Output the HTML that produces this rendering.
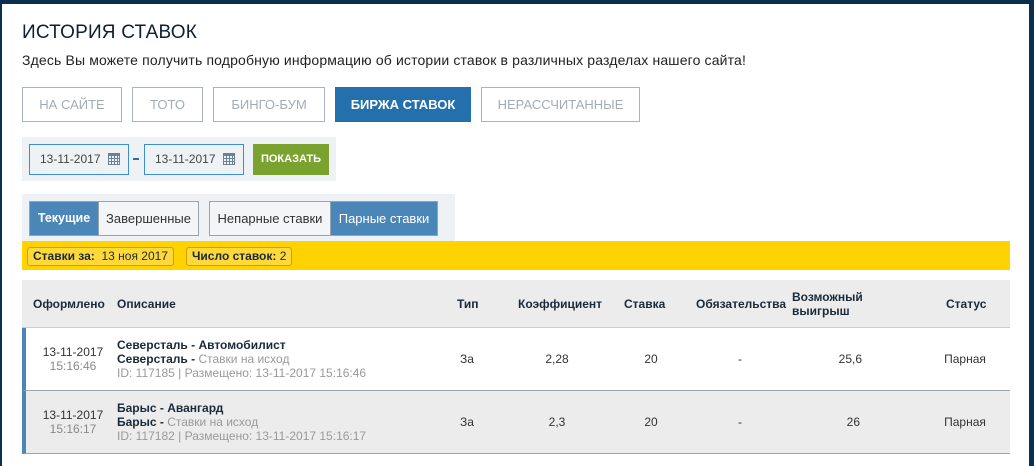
<!DOCTYPE html>
<html><head><meta charset="utf-8"><style>
*{margin:0;padding:0;box-sizing:border-box}
body{width:1034px;height:466px;overflow:hidden;background:#fff;font-family:"Liberation Sans",sans-serif;position:relative;color:#1a2a3a}
.a{position:absolute;white-space:nowrap}
.fr{position:absolute;background:#0d2f4f}
.tab{position:absolute;top:87px;height:35px;border:1px solid #a9b4bf;color:#a2acb6;font-size:13px;line-height:33px;text-align:center}
.btn{position:absolute;top:201px;height:35px;border:1px solid #97a3ae;font-size:13px;line-height:33px;text-align:center;color:#333;background:#eef2f5}
.on{background:#4a86b8;color:#fff;border-color:#97a3ae}
.inp{position:absolute;top:144px;height:31px;width:100px;border:1px solid #3d8ed0;background:#eef2f5;font-size:12px;line-height:29px;padding-left:10px;color:#444}
.cal{position:absolute;right:8px;top:8px;width:12px;height:12px;border:1px solid #6c7f93;border-top-width:3px;background:repeating-linear-gradient(90deg,transparent 0 2px,#6c7f93 2px 3px),repeating-linear-gradient(0deg,transparent 0 2px,#6c7f93 2px 3px)}
.badge{position:absolute;top:247px;height:19px;border:1px solid #c9a200;border-radius:3px;background:#ffd93a;font-size:12px;line-height:17px;padding:0 5px}
.h{position:absolute;font-size:12px;font-weight:bold;color:#1a2a3a}
.c{position:absolute;font-size:12px;color:#333;text-align:center}
</style></head><body>
<div class="fr" style="left:0;top:0;width:1034px;height:4px"></div>
<div class="fr" style="left:0;top:0;width:2px;height:466px"></div>
<div class="fr" style="left:1029px;top:0;width:5px;height:466px"></div>

<div class="a" style="left:22px;top:22px;font-size:19px;color:#0d1f33;letter-spacing:0.2px">ИСТОРИЯ СТАВОК</div>
<div class="a" style="left:22px;top:52px;font-size:14px;color:#222;letter-spacing:0.15px">Здесь Вы можете получить подробную информацию об истории ставок в различных разделах нашего сайта!</div>

<div class="tab" style="left:22px;width:100px">НА САЙТЕ</div>
<div class="tab" style="left:132px;width:71px">ТОТО</div>
<div class="tab" style="left:213px;width:112px">БИНГО-БУМ</div>
<div class="tab" style="left:335px;width:136px;background:#2370ad;border-color:#2370ad;color:#fff;font-weight:bold">БИРЖА СТАВОК</div>
<div class="tab" style="left:481px;width:159px">НЕРАССЧИТАННЫЕ</div>

<div class="a" style="left:22px;top:137px;width:314px;height:44px;background:#eef2f5"></div>
<div class="inp" style="left:29px">13-11-2017<span class="cal"></span></div>
<div class="a" style="left:133px;top:158px;width:6px;height:2px;background:#2370ad"></div>
<div class="inp" style="left:144px">13-11-2017<span class="cal"></span></div>
<div class="a" style="left:253px;top:144px;width:76px;height:31px;background:#79a22e;color:#fff;font-size:11px;font-weight:bold;line-height:31px;text-align:center">ПОКАЗАТЬ</div>

<div class="a" style="left:22px;top:194px;width:433px;height:47px;background:#eef2f5"></div>
<div class="btn on" style="left:29px;width:70px;font-weight:bold;font-size:12.5px">Текущие</div>
<div class="btn" style="left:98px;width:101px;background:#f3f5f7">Завершенные</div>
<div class="btn" style="left:209px;width:122px;background:#f3f5f7">Непарные ставки</div>
<div class="btn on" style="left:330px;width:108px">Парные ставки</div>

<div class="a" style="left:22px;top:241px;width:988px;height:29px;background:#ffd200"></div>
<div class="badge" style="left:27px"><b>Ставки за:</b>&nbsp; 13 ноя 2017</div>
<div class="badge" style="left:186px"><b>Число ставок:</b>&nbsp;2</div>

<div class="a" style="left:22px;top:280px;width:988px;height:48px;background:#ececec;border-bottom:1px solid #ccc"></div>
<div class="h" style="left:33px;top:297px">Оформлено</div>
<div class="h" style="left:117px;top:297px">Описание</div>
<div class="h" style="left:457px;top:297px">Тип</div>
<div class="h" style="left:518px;top:297px">Коэффициент</div>
<div class="h" style="left:624px;top:297px">Ставка</div>
<div class="h" style="left:696px;top:297px">Обязательства</div>
<div class="h" style="left:792px;top:290px;line-height:14px">Возможный<br>выигрыш</div>
<div class="h" style="left:946px;top:297px">Статус</div>

<div class="a" style="left:22px;top:328px;width:988px;height:63px;background:#fff;border-left:4px solid #4a86b8;border-bottom:1px solid #9aa5ae"></div>
<div class="a" style="left:22px;top:391px;width:988px;height:63px;background:#ececec;border-left:4px solid #4a86b8;border-bottom:1px solid #9aa5ae"></div>

<div class="c" style="left:33px;top:345px;width:80px;line-height:14px">13-11-2017<br><span style="color:#888">15:16:46</span></div>
<div class="a" style="left:117px;top:338px;font-size:12px;line-height:14px;color:#1a2a3a"><b>Северсталь - Автомобилист</b><br><b>Северсталь -</b> <span style="color:#999">Ставки на исход</span><br><span style="color:#999">ID: 117185 | Размещено: 13-11-2017 15:16:46</span></div>
<div class="c" style="left:447px;top:352px;width:40px">За</div>
<div class="c" style="left:517px;top:352px;width:80px">2,28</div>
<div class="c" style="left:621px;top:352px;width:60px">20</div>
<div class="c" style="left:720px;top:352px;width:40px">-</div>
<div class="c" style="left:800px;top:352px;width:62px;text-align:right">25,6</div>
<div class="c" style="left:925px;top:352px;width:80px">Парная</div>

<div class="c" style="left:33px;top:408px;width:80px;line-height:14px">13-11-2017<br><span style="color:#888">15:16:17</span></div>
<div class="a" style="left:117px;top:401px;font-size:12px;line-height:14px;color:#1a2a3a"><b>Барыс - Авангард</b><br><b>Барыс -</b> <span style="color:#999">Ставки на исход</span><br><span style="color:#999">ID: 117182 | Размещено: 13-11-2017 15:16:17</span></div>
<div class="c" style="left:447px;top:415px;width:40px">За</div>
<div class="c" style="left:517px;top:415px;width:80px">2,3</div>
<div class="c" style="left:621px;top:415px;width:60px">20</div>
<div class="c" style="left:720px;top:415px;width:40px">-</div>
<div class="c" style="left:800px;top:415px;width:60px;text-align:right">26</div>
<div class="c" style="left:925px;top:415px;width:80px">Парная</div>
</body></html>
